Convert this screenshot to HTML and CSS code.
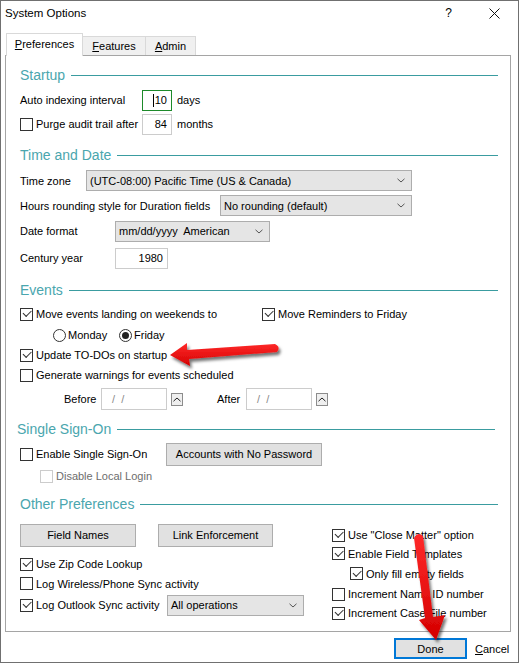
FILE: index.html
```html
<!DOCTYPE html>
<html lang="en">
<head>
  <meta charset="UTF-8">
  <title>System Options</title>
  <link rel="stylesheet" href="styles.css">
</head>
<body>
  <div class="window">
    <div class="titlebar">
      <span class="title">System Options</span>
      <span class="help">?</span>
      <svg class="close" width="11" height="11" viewBox="0 0 11 11">
        <path d="M0.5 0.5L10.5 10.5M10.5 0.5L0.5 10.5" stroke="#111" stroke-width="1"/>
      </svg>
    </div>

    <div class="tabs">
      <div class="tab active"><u>P</u>references</div>
      <div class="tab w63"><u>F</u>eatures</div>
      <div class="tab w50"><u>A</u>dmin</div>
    </div>

    <div class="panel">
      <!-- Startup -->
      <div class="section-title">Startup</div>
      <div class="row h24 mt3">
        <span class="label w122">Auto indexing interval</span>
        <span class="field num focus w30"><span class="caret"></span>10</span>
        <span class="unit">days</span>
      </div>
      <div class="row h24">
        <label class="check w122"><span class="box"></span>Purge audit trail after</label>
        <span class="field num w30">84</span>
        <span class="unit">months</span>
      </div>

      <!-- Time and Date -->
      <div class="section-title mt9">Time and Date</div>
      <div class="row h25 mt3">
        <span class="label w66">Time zone</span>
        <div class="select w326">
          <span class="value">(UTC-08:00) Pacific Time (US &amp; Canada)</span>
          <svg width="8" height="5" viewBox="0 0 8 5"><path d="M0.5 0.8L4 4L7.5 0.8" fill="none" stroke="#555"/></svg>
        </div>
      </div>
      <div class="row h25">
        <span class="label w200">Hours rounding style for Duration fields</span>
        <div class="select w192">
          <span class="value">No rounding (default)</span>
          <svg width="8" height="5" viewBox="0 0 8 5"><path d="M0.5 0.8L4 4L7.5 0.8" fill="none" stroke="#555"/></svg>
        </div>
      </div>
      <div class="row h26">
        <span class="label w95">Date format</span>
        <div class="select w155">
          <span class="value">mm/dd/yyyy&nbsp; American</span>
          <svg width="8" height="5" viewBox="0 0 8 5"><path d="M0.5 0.8L4 4L7.5 0.8" fill="none" stroke="#555"/></svg>
        </div>
      </div>
      <div class="row h28">
        <span class="label w95">Century year</span>
        <span class="field num w53">1980</span>
      </div>

      <!-- Events -->
      <div class="section-title mt8">Events</div>
      <div class="row h22 mt3">
        <label class="check w242"><span class="box on"></span>Move events landing on weekends to</label>
        <label class="check"><span class="box on"></span>Move Reminders to Friday</label>
      </div>
      <div class="row indent33">
        <label class="radio-item w66"><span class="radio"></span>Monday</label>
        <label class="radio-item"><span class="radio on"></span>Friday</label>
      </div>
      <div class="row">
        <label class="check"><span class="box on"></span>Update TO-DOs on startup</label>
      </div>
      <div class="row">
        <label class="check"><span class="box"></span>Generate warnings for events scheduled</label>
      </div>
      <div class="row h28 indent44">
        <span class="label w37">Before</span>
        <span class="field date w66">/&nbsp;&nbsp;/</span>
        <span class="spin"><svg width="8" height="5" viewBox="0 0 8 5"><path d="M0.5 4.2L4 1L7.5 4.2" fill="none" stroke="#222"/></svg></span>
        <span class="label w29 ml34">After</span>
        <span class="field date w66">/&nbsp;&nbsp;/</span>
        <span class="spin"><svg width="8" height="5" viewBox="0 0 8 5"><path d="M0.5 4.2L4 1L7.5 4.2" fill="none" stroke="#222"/></svg></span>
      </div>

      <!-- Single Sign-On -->
      <div class="section-title mt6 shift">Single Sign-On</div>
      <div class="row h24 mt3">
        <label class="check w146"><span class="box"></span>Enable Single Sign-On</label>
        <button class="btn w156">Accounts with No Password</button>
      </div>
      <div class="row indent20">
        <label class="check disabled"><span class="box"></span>Disable Local Login</label>
      </div>

      <!-- Other Preferences -->
      <div class="section-title mt8">Other Preferences</div>
      <div class="cols">
        <div class="col-left">
          <div class="row h28">
            <button class="btn w116">Field Names</button>
            <button class="btn w115 ml22">Link Enforcement</button>
          </div>
          <div class="row mt5">
            <label class="check"><span class="box on"></span>Use Zip Code Lookup</label>
          </div>
          <div class="row h19">
            <label class="check"><span class="box"></span>Log Wireless/Phone Sync activity</label>
          </div>
          <div class="row h24">
            <label class="check w147"><span class="box on"></span>Log Outlook Sync activity</label>
            <div class="select w137">
              <span class="value">All operations</span>
              <svg width="8" height="5" viewBox="0 0 8 5"><path d="M0.5 0.8L4 4L7.5 0.8" fill="none" stroke="#555"/></svg>
            </div>
          </div>
        </div>
        <div class="col-right">
          <div class="row h18 mt5">
            <label class="check"><span class="box on"></span>Use "Close Matter" option</label>
          </div>
          <div class="row h19">
            <label class="check"><span class="box on"></span>Enable Field Templates</label>
          </div>
          <div class="row h21 indent18">
            <label class="check"><span class="box on"></span>Only fill empty fields</label>
          </div>
          <div class="row">
            <label class="check"><span class="box"></span>Increment Name ID number</label>
          </div>
          <div class="row h18">
            <label class="check"><span class="box on"></span>Increment Case/File number</label>
          </div>
        </div>
      </div>
    </div>

    <div class="footer">
      <button class="btn done">Done</button>
      <span class="cancel"><u>C</u>ancel</span>
    </div>
  </div>

  <!-- annotation arrows drawn over the dialog -->
  <svg class="arrows" width="519" height="664" viewBox="0 0 519 664">
    <defs>
      <filter id="shadow" x="-20%" y="-20%" width="140%" height="140%">
        <feDropShadow dx="2" dy="3" stdDeviation="1.6" flood-color="#000" flood-opacity="0.55"/>
      </filter>
      <linearGradient id="red" x1="0" y1="0" x2="0" y2="1">
        <stop offset="0" stop-color="#ff2a2a"/>
        <stop offset="1" stop-color="#d40000"/>
      </linearGradient>
    </defs>
    <path d="M170 355L187 343L187 350L275 344Q281 347 277 352L189 359L190 366Z" fill="url(#red)" filter="url(#shadow)"/>
    <path d="M414 538Q418 531 423 536L433 617L445 615L436 640L419 620L425 618Z" fill="url(#red)" filter="url(#shadow)"/>
  </svg>
</body>
</html>
```

FILE: styles.css
```css
* {
  margin: 0;
  padding: 0;
  box-sizing: border-box;
}

body {
  width: 519px;
  height: 664px;
  overflow: hidden;
  background-color: #fff;
  font-family: "Liberation Sans", Arial, sans-serif;
  font-size: 11px;
  color: #000;
}

.window {
  width: 519px;
  height: 663px;
  border: 1px solid #707070;
  background-color: #fff;
}

/* title bar */
.titlebar {
  display: flex;
  align-items: center;
  height: 24px;
  padding: 0 18px 0 4px;
}

.title {
  flex: 1;
  font-size: 11.5px;
}

.help {
  font-size: 12px;
  margin-right: 37px;
}

/* tabs */
.tabs {
  display: flex;
  align-items: flex-end;
  height: 23px;
  margin: 8px 0 -1px 5px;
  position: relative;
  z-index: 1;
}

.tab {
  height: 19px;
  margin-bottom: 1px;
  display: flex;
  align-items: center;
  justify-content: center;
  background-color: #f0f0f0;
  border: 1px solid #d9d9d9;
  border-bottom: none;
  border-left: none;
}

.tab.active {
  width: 77px;
  height: 23px;
  margin-bottom: 0;
  background-color: #fff;
  border-left: 1px solid #d9d9d9;
  padding-bottom: 2px;
}

.tab.w63 { width: 63px; }
.tab.w50 { width: 50px; }

.panel {
  width: 506px;
  height: 577px;
  margin-left: 4px;
  border: 1px solid #a5a5a5;
  padding: 9px 12px 0 14px;
}

/* section headings */
.section-title {
  display: flex;
  align-items: center;
  height: 20px;
  font-size: 14px;
  color: #4aa6ae;
}

.section-title::after {
  content: '';
  flex: 1;
  height: 1px;
  margin-left: 6px;
  background-color: #3a9ca0;
}

.section-title.shift {
  margin-left: -3px;
  margin-right: 3px;
}

/* rows */
.row {
  display: flex;
  align-items: center;
  height: 20px;
  white-space: nowrap;
}

.h18 { height: 18px; }
.h19 { height: 19px; }
.h21 { height: 21px; }
.h22 { height: 22px; }
.h24 { height: 24px; }
.h25 { height: 25px; }
.h26 { height: 26px; }
.h28 { height: 28px; }

.mt3 { margin-top: 3px; }
.mt5 { margin-top: 5px; }
.mt6 { margin-top: 6px; }
.mt8 { margin-top: 8px; }
.mt9 { margin-top: 9px; }

.indent18 { padding-left: 18px; }
.indent20 { padding-left: 20px; }
.indent33 { padding-left: 33px; }
.indent44 { padding-left: 44px; }

.ml22 { margin-left: 22px; }
.ml34 { margin-left: 34px; }

.w29 { width: 29px; }
.w30 { width: 30px; }
.w37 { width: 37px; }
.w53 { width: 53px; }
.w66 { width: 66px; }
.w95 { width: 95px; }
.w115 { width: 115px; }
.w116 { width: 116px; }
.w122 { width: 122px; }
.w137 { width: 137px; }
.w146 { width: 146px; }
.w147 { width: 147px; }
.w155 { width: 155px; }
.w156 { width: 156px; }
.w192 { width: 192px; }
.w200 { width: 200px; }
.w242 { width: 242px; }
.w326 { width: 326px; }

.label {
  flex-shrink: 0;
}

.unit {
  margin-left: 5px;
}

/* text fields */
.field {
  display: flex;
  align-items: center;
  height: 21px;
  border: 1px solid #cccccc;
  background-color: #fff;
  flex-shrink: 0;
}

.field.num {
  justify-content: flex-end;
  padding-right: 4px;
}

.field.focus {
  border-color: #1d8a2a;
}

.caret {
  width: 1px;
  height: 13px;
  background-color: #000;
  margin-right: 1px;
}

.field.date {
  height: 22px;
  padding-left: 10px;
  color: #8a8a8a;
}

.spin {
  display: flex;
  align-items: center;
  justify-content: center;
  width: 12px;
  height: 13px;
  margin-left: 4px;
  border: 1px solid #8c8c8c;
  background-color: #efefef;
}

/* drop downs */
.select {
  display: flex;
  align-items: center;
  height: 21px;
  padding: 0 6px 0 3px;
  border: 1px solid #adadad;
  background-color: #e5e5e5;
  flex-shrink: 0;
}

.select .value {
  flex: 1;
}

/* check boxes and radios */
.check, .radio-item {
  display: flex;
  align-items: center;
  flex-shrink: 0;
}

.box {
  position: relative;
  width: 13px;
  height: 13px;
  margin-right: 3px;
  border: 1px solid #333;
  background-color: #fff;
}

.box.on::after {
  content: '';
  position: absolute;
  left: 2px;
  top: 1.5px;
  width: 7px;
  height: 3.5px;
  border-left: 1px solid #333;
  border-bottom: 1px solid #333;
  transform: rotate(-45deg);
}

.check.disabled {
  color: #6d6d6d;
}

.check.disabled .box {
  border-color: #cccccc;
}

.radio {
  position: relative;
  width: 13px;
  height: 13px;
  margin-right: 2px;
  border: 1px solid #333;
  border-radius: 50%;
  background-color: #fff;
}

.radio.on::after {
  content: '';
  position: absolute;
  left: 2px;
  top: 2px;
  width: 7px;
  height: 7px;
  border-radius: 50%;
  background-color: #222;
}

/* buttons */
.btn {
  height: 23px;
  border: 1px solid #adadad;
  background-color: #e1e1e1;
  font-family: inherit;
  font-size: 11px;
  color: #000;
  flex-shrink: 0;
}

/* other preferences columns */
.cols {
  display: flex;
  margin-top: 7px;
}

.col-left {
  width: 312px;
}

.col-right {
  flex: 1;
}

/* bottom buttons */
.footer {
  display: flex;
  align-items: center;
  margin-top: 6px;
  padding-left: 393px;
}

.btn.done {
  width: 73px;
  height: 21px;
  border: 2px solid #0078d7;
}

.cancel {
  margin-left: 8px;
}

.arrows {
  position: absolute;
  left: 0;
  top: 0;
  pointer-events: none;
}
```
